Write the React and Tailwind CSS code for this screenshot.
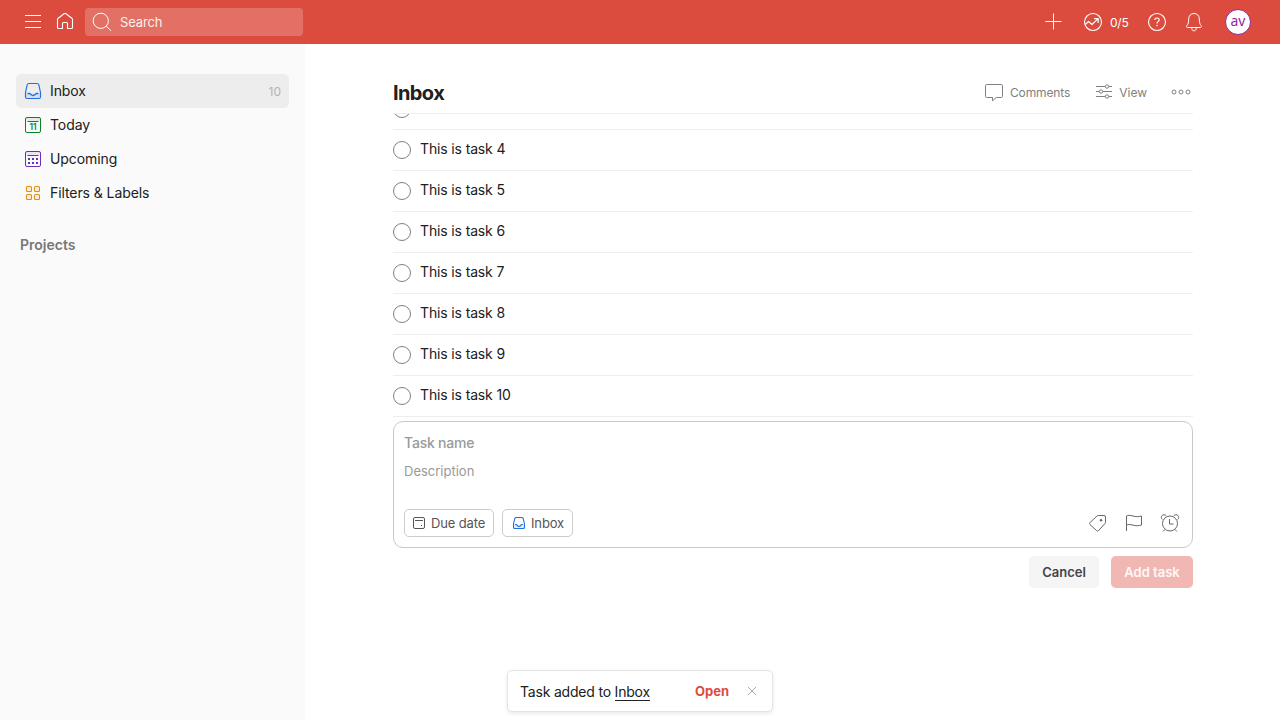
import React from "react";

function Icon({ size = 24, className = "", children }) {
  return (
    <svg
      width={size}
      height={size}
      viewBox={`0 0 ${size} ${size}`}
      fill="none"
      stroke="currentColor"
      strokeWidth="1"
      className={`shrink-0 ${className}`}
    >
      {children}
    </svg>
  );
}

const MenuIcon = () => (
  <Icon>
    <path d="M4 5.5h16M4 11.5h16M4 17.5h16" />
  </Icon>
);

const HomeIcon = () => (
  <Icon>
    <path
      strokeLinejoin="round"
      strokeWidth="1.1"
      d="M4.5 9.3v8.2a1 1 0 0 0 1 1h4v-5a1 1 0 0 1 1-1h3a1 1 0 0 1 1 1v5h4a1 1 0 0 0 1-1V9.3a1 1 0 0 0-.35-.75l-6.5-5a1 1 0 0 0-1.3 0l-6.5 5a1 1 0 0 0-.35.75z"
    />
  </Icon>
);

const SearchIcon = () => (
  <Icon>
    <circle cx="10.8" cy="10.8" r="7.600" />
    <path d="M16.3 16.1l4.700 4.700" />
  </Icon>
);

const PlusIcon = () => (
  <Icon>
    <path d="M12.5 3.5v16M4.5 11.5h16" />
  </Icon>
);

const TrendIcon = () => (
  <Icon>
    <circle cx="12" cy="12" r="8.5" strokeWidth="1.1" />
    <path strokeWidth="1.2" strokeLinejoin="round" d="M4.2 14.500l3.400-3 3.400 3 5.600-5.400M13 8.700h4.200v4.200" />
  </Icon>
);

const HelpIcon = () => (
  <Icon>
    <circle cx="12" cy="12" r="8.5" strokeWidth="1.1" />
    <path strokeWidth="1.2" d="M9.800 10.100c0-1.300.9-2.100 2.200-2.100s2.200.8 2.200 2c0 1.600-2.200 1.700-2.200 3.400" />
    <circle cx="12" cy="15.500" r=".8" fill="currentColor" stroke="none" />
  </Icon>
);

const BellIcon = () => (
  <Icon>
    <path
      strokeLinejoin="round"
      d="M12 3.500c-3.200 0-5.300 2.300-5.300 5.300 0 4-.7 5.500-1.800 6.900-.7.900-.4 1.800.7 1.800h12.800c1.100 0 1.400-.9.700-1.800-1.100-1.400-1.800-2.900-1.800-6.900 0-3-2.100-5.300-5.300-5.300z"
    />
    <path d="M9.700 18.200c.2 1.700 1.100 2.700 2.300 2.700s2.100-1 2.300-2.700" />
  </Icon>
);

const InboxIcon = () => (
  <Icon className="text-[#246fe0]">
    <path
      fill="currentColor"
      fillOpacity=".1"
      stroke="none"
      d="M4.500 14.500h3.800c1.200 0 1.500 2.200 3.700 2.200s2.500-2.200 3.700-2.200h3.800V18a1.500 1.500 0 0 1-1.500 1.500H6A1.500 1.500 0 0 1 4.500 18z"
    />
    <path
      strokeWidth="1.15"
      d="M7.700 4.500h8.600a1.500 1.500 0 0 1 1.450 1.100l1.650 7.200q.1.400.1.800V18a1.500 1.500 0 0 1-1.500 1.500H6A1.500 1.500 0 0 1 4.500 18v-4.400q0-.4.100-.8l1.650-7.200A1.500 1.500 0 0 1 7.700 4.500z"
    />
    <path strokeWidth="1.3" d="M6.500 14.500h2c1 0 1.500 2 3.500 2s2.500-2 3.500-2h2" />
  </Icon>
);

const TodayIcon = () => (
  <Icon className="text-[#058527]">
    <rect x="4.500" y="4.500" width="15" height="15" rx="1.500" />
    <path d="M5 5h14v3H5z" fill="currentColor" fillOpacity=".1" stroke="none" />
    <path d="M6.500 8.500h11" />
    <text
      x="12"
      y="17"
      textAnchor="middle"
      fill="currentColor"
      stroke="none"
      className="font-['Inter',sans-serif] text-[8.5px] font-semibold"
    >
      11
    </text>
  </Icon>
);

const UpcomingIcon = () => (
  <Icon className="text-[#692fc2]">
    <rect x="4.500" y="4.500" width="15" height="15" rx="1.500" />
    <path d="M5 5h14v3H5z" fill="currentColor" fillOpacity=".1" stroke="none" />
    <path d="M6.500 8.500h11" />
    <path
      fill="currentColor"
      stroke="none"
      d="M7 11h2v2H7zM11 11h2v2h-2zM15 11h2v2h-2zM7 15h2v2H7zM11 15h2v2h-2zM15 15h2v2h-2z"
    />
  </Icon>
);

const FiltersIcon = () => (
  <Icon className="text-[#eb8909]">
    <g fill="currentColor" fillOpacity=".08" strokeWidth="1.1">
      <rect x="5.500" y="5.500" width="5" height="5" rx="1" />
      <rect x="13.500" y="5.500" width="5" height="5" rx="1" />
      <rect x="5.500" y="13.500" width="5" height="5" rx="1" />
      <rect x="13.500" y="13.500" width="5" height="5" rx="1" />
    </g>
  </Icon>
);

const CommentIcon = () => (
  <Icon>
    <path
      strokeLinejoin="round"
      d="M4.700 4.500h14.600a1.200 1.200 0 0 1 1.200 1.200v10.600a1.200 1.200 0 0 1-1.200 1.200h-5.100l-3.700 3.300v-3.300H4.700a1.200 1.200 0 0 1-1.200-1.200V5.700a1.200 1.200 0 0 1 1.200-1.200z"
    />
  </Icon>
);

const ViewIcon = () => (
  <Icon>
    <path d="M4 6.500h9.200M16.800 6.500H20M4 11.500h3.200M10.800 11.500H20M4 16.500h9.200M16.800 16.500H20" />
    <circle cx="15" cy="6.500" r="1.700" />
    <circle cx="9" cy="11.500" r="1.700" />
    <circle cx="15" cy="16.500" r="1.700" />
  </Icon>
);

const MoreIcon = () => (
  <Icon>
    <circle cx="5" cy="12" r="2" />
    <circle cx="12" cy="12" r="2" />
    <circle cx="19" cy="12" r="2" />
  </Icon>
);

const DueIcon = () => (
  <Icon size={16}>
    <rect x="2.500" y="2.500" width="11" height="11" rx="1.500" />
    <path d="M4 5.500h8" />
    <path d="M10 10h1v1h-1z" fill="currentColor" stroke="none" />
  </Icon>
);

const SmallInboxIcon = () => (
  <Icon size={16} className="text-[#246fe0]">
    <path
      fill="currentColor"
      fillOpacity=".12"
      stroke="none"
      d="M2.500 9.500h2.700c.8 0 1 2 2.800 2s2-2 2.800-2h2.700v4h-11z"
    />
    <path
      strokeWidth="1.1"
      d="M5 2.500h6a1.200 1.200 0 0 1 1.150.9l1.250 5q.1.300.1.600v3.200a1.300 1.300 0 0 1-1.300 1.300H3.800a1.300 1.300 0 0 1-1.300-1.300V9q0-.3.100-.6l1.250-5A1.200 1.200 0 0 1 5 2.500z"
    />
    <path strokeWidth="1.2" d="M4 9.500h1.300c.7 0 1 2 2.700 2s2-2 2.700-2H12" />
  </Icon>
);

const TagIcon = () => (
  <Icon>
    <path
      strokeLinejoin="round"
      d="M12.600 4.500h5.400a1.500 1.500 0 0 1 1.500 1.500v5.300a2 2 0 0 1-.6 1.400l-6.200 6.700a1.500 1.500 0 0 1-2.200.1l-6.500-5.900a1.500 1.500 0 0 1 0-2.100l6.900-6.400a2.500 2.500 0 0 1 1.700-.6z"
    />
    <circle cx="15" cy="9.300" r="1.200" fill="currentColor" stroke="none" />
  </Icon>
);

const FlagIcon = () => (
  <Icon>
    <path
      strokeLinejoin="round"
      d="M4.500 20V4.900c1.400-.7 3.600-.8 6.500.1s5.600.9 8.500 0v9c-2.900.9-5.600.9-8.500.1s-5-.7-6.500 0"
    />
  </Icon>
);

const AlarmIcon = () => (
  <Icon>
    <circle cx="12" cy="12.500" r="7.500" />
    <path d="M11.500 8v5h4M7 18.500L5 20.500M17 18.500l2 2" />
    <path d="M4.300 8.500C3 7.400 3 5.600 4.100 4.500s3-1 4.100.2M19.700 8.500c1.300-1.100 1.300-2.900.2-4s-3-1-4.100.2" />
  </Icon>
);

const CloseIcon = () => (
  <Icon size={16}>
    <path d="M3.800 3.800l8.400 8.400M12.200 3.800l-8.400 8.400" />
  </Icon>
);

function Header() {
  return (
    <header className="flex h-11 shrink-0 items-center bg-[#db4c3f] pl-[21px] pr-[29px] text-white">
      <MenuIcon />
      <div className="ml-2">
        <HomeIcon />
      </div>
      <div className="ml-2 flex h-7 w-[218px] items-center gap-1.5 rounded bg-[#e27065] pl-[5px] text-[13px]">
        <SearchIcon />
        <span className="pt-px tracking-[-0.01em] text-[#fceeed]">Search</span>
      </div>
      <div className="ml-auto flex items-center">
        <PlusIcon />
        <div className="ml-4 flex w-16 items-center gap-[5px]">
          <TrendIcon />
          <span className="pt-px text-xs tracking-[-0.02em]">0/5</span>
        </div>
        <HelpIcon />
        <div className="ml-[13px]">
          <BellIcon />
        </div>
        <div className="ml-[19px] flex size-[26px] items-center justify-center rounded-full border border-[#93269a] bg-white font-['Noto_Sans',sans-serif] text-sm leading-none text-[#93269a]">
          <span className="-mt-0.5">av</span>
        </div>
      </div>
    </header>
  );
}

const NAV = [
  { label: "Inbox", icon: InboxIcon, count: 10, active: true },
  { label: "Today", icon: TodayIcon },
  { label: "Upcoming", icon: UpcomingIcon },
  { label: "Filters & Labels", icon: FiltersIcon },
];

function Sidebar() {
  return (
    <aside className="w-[305px] shrink-0 bg-[#fafafa] pl-4 pr-4 pt-[30px]">
      <nav>
        {NAV.map(({ label, icon: NavIcon, count, active }) => (
          <div
            key={label}
            className={`flex h-[34px] items-center gap-[5px] rounded-[5px] pl-[5px] pr-2 text-sm text-[#202020] ${
              active ? "bg-[#ededed]" : ""
            }`}
          >
            <NavIcon />
            <span className="tracking-[-0.006em]">{label}</span>
            {count && <span className="ml-auto pt-px text-xs text-[#b3b3b3]">{count}</span>}
          </div>
        ))}
      </nav>
      <h2 className="ml-1 mt-[25px] text-sm font-semibold text-[#777]">Projects</h2>
    </aside>
  );
}

function Task({ name }) {
  return (
    <li className="flex h-[41px] shrink-0 gap-[9px] border-b border-[#eee] pt-[11px]">
      <span className="size-[18px] shrink-0 rounded-full border border-[#808080]" />
      <span className="-mt-0.5 text-sm tracking-[-0.01em] text-[#202020]">{name}</span>
    </li>
  );
}

function Editor() {
  return (
    <div className="mt-1">
      <div className="flex h-[127px] flex-col rounded-[10px] border border-[#c9c9c9] px-2.5 pb-2.5 pt-[11px]">
        <div className="text-sm font-medium tracking-[-0.015em] text-[#999]">Task name</div>
        <div className="mt-2 text-[13px] leading-5 text-[#999]">Description</div>
        <div className="mt-auto flex items-center">
          <div className="flex h-7 w-[90px] items-center gap-1 rounded-[5px] border border-[#ccc] pl-1.5 text-[13px] text-[#555]">
            <DueIcon />
            <span className="whitespace-nowrap pt-px tracking-[-0.01em]">Due date</span>
          </div>
          <div className="ml-2 flex h-7 w-[71px] items-center gap-1 rounded-[5px] border border-[#ccc] pl-2 text-[13px] text-[#555]">
            <SmallInboxIcon />
            <span className="pt-px tracking-[-0.01em]">Inbox</span>
          </div>
          <div className="ml-auto flex gap-3 text-[#666]">
            <TagIcon />
            <FlagIcon />
            <AlarmIcon />
          </div>
        </div>
      </div>
      <div className="mt-2 flex justify-end gap-3 text-[13px] font-semibold">
        <button className="h-8 w-[70px] rounded-[5px] bg-[#f5f5f5] pt-0.5 text-[#444]">Cancel</button>
        <button className="h-8 w-[82px] rounded-[5px] bg-[#f1b7b2] pt-0.5 text-white/90">Add task</button>
      </div>
    </div>
  );
}

function Toast() {
  return (
    <div className="absolute bottom-2 left-[507px] flex h-[42px] w-[266px] items-center rounded-[5px] border border-[#e3e3e3] bg-white pl-3 pr-3 text-sm text-[#202020] shadow-[0_2px_4px_rgba(0,0,0,0.08)]">
      <span className="pt-0.5 tracking-[-0.014em]">
        Task added to <span className="border-b border-[#202020]">Inbox</span>
      </span>
      <span className="ml-auto pt-px text-[13px] font-bold text-[#db4c3f]">Open</span>
      <span className="ml-[15px] text-[#aaa]">
        <CloseIcon />
      </span>
    </div>
  );
}

export default function App() {
  return (
    <div className="relative flex h-[720px] w-[1280px] flex-col overflow-hidden bg-white font-['Inter',sans-serif]">
      <Header />
      <div className="flex min-h-0 flex-1">
        <Sidebar />
        <main className="ml-[88px] w-[800px]">
          <div className="flex h-[70px] items-center border-b border-[#eee] pt-[27px]">
            <h1 className="pt-0.5 text-xl font-bold tracking-[-0.03em] text-[#202020]">Inbox</h1>
            <div className="ml-auto flex items-center text-xs text-[#808080]">
              <CommentIcon />
              <span className="ml-1 pt-0.5 tracking-[-0.01em]">Comments</span>
              <div className="ml-[22px]">
                <ViewIcon />
              </div>
              <span className="ml-[3px] pt-0.5">View</span>
              <div className="ml-[22px]">
                <MoreIcon />
              </div>
            </div>
          </div>
          <div className="flex h-[303px] flex-col justify-end overflow-hidden">
            <ul className="flex flex-col">
              <Task />
              {[4, 5, 6, 7, 8, 9, 10].map((n) => (
                <Task key={n} name={`This is task ${n}`} />
              ))}
            </ul>
          </div>
          <Editor />
        </main>
      </div>
      <Toast />
    </div>
  );
}
